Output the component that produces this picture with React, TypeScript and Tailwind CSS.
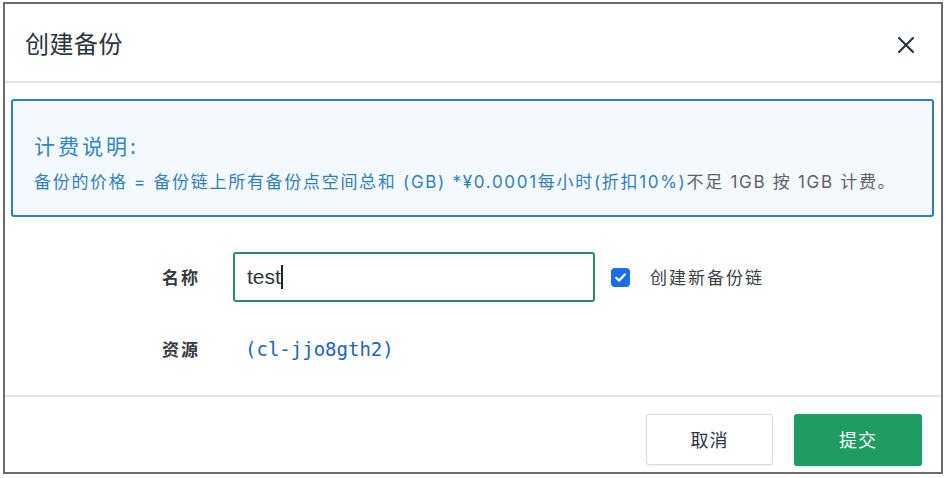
import React from "react";

const sans = '"Inter", "Noto Sans CJK SC", sans-serif';
const cjk = '"Noto Sans CJK SC", sans-serif';

export default function App() {
  return (
    <div className="w-[946px] h-[478px] bg-white pt-[2px] pl-[3px]" style={{ fontFamily: sans }}>
      <div className="w-[940px] h-[472px] border-2 border-[#6b6b6b] bg-white flex flex-col">
        {/* header */}
        <div className="h-[79px] shrink-0 flex items-center justify-between pl-[20px] pr-[26px] border-b-2 border-[#dfe3e7]">
          <div className="text-[24px] leading-none text-[#2b3440] tracking-[0.5px]" style={{ fontFamily: cjk }}>
            创建备份
          </div>
          <svg width="18" height="18" viewBox="0 0 18 18" className="mt-[4px]">
            <path d="M2 2 L16 16 M16 2 L2 16" stroke="#2b3440" strokeWidth="2.2" strokeLinecap="round" />
          </svg>
        </div>

        {/* info box */}
        <div className="mt-[16px] ml-[6px] mr-[7px] h-[118px] shrink-0 border-2 border-[#2b7ec1] rounded-[3px] bg-[#f4f9fd] pl-[21px] pt-[32px]">
          <div className="text-[21px] leading-[24px] text-[#2f86c8] tracking-[3px]" style={{ fontFamily: cjk }}>
            计费说明:
          </div>
          <div className="mt-[15px] text-[17px] leading-[21px] tracking-[1.7px] whitespace-nowrap" style={{ fontFamily: sans }}>
            <span className="text-[#2f80c2]">备份的价格 = 备份链上所有备份点空间总和 (GB) *¥0.0001每小时(折扣10%)</span>
            <span className="text-[#5c636b]">不足 1GB 按 1GB 计费。</span>
          </div>
        </div>

        {/* form */}
        <div className="flex-1 flex flex-col pl-[157px] pt-[35px]">
          <div className="flex items-center h-[50px]">
            <div className="w-[71px] text-[17px] font-bold text-[#333a42] tracking-[2px]" style={{ fontFamily: cjk }}>
              名称
            </div>
            <div className="w-[362px] h-[50px] border-2 border-[#2a8f62] rounded-[3px] flex items-center pl-[12px]">
              <span className="text-[21px] text-[#2f3640]" style={{ fontFamily: '"Liberation Sans", Arial, sans-serif' }}>
                test
              </span>
              <span className="w-[2px] h-[24px] bg-[#222] ml-[0px]" />
            </div>
            <div className="ml-[16px] w-[19px] h-[19px] rounded-[4px] bg-[#1a6ee8] flex items-center justify-center">
              <svg width="13" height="13" viewBox="0 0 13 13">
                <path d="M2.2 6.8 L5.2 9.6 L10.8 3.4" stroke="white" strokeWidth="2.2" fill="none" strokeLinecap="round" strokeLinejoin="round" />
              </svg>
            </div>
            <div className="ml-[20px] text-[17px] text-[#3a4048] tracking-[2px]" style={{ fontFamily: cjk }}>
              创建新备份链
            </div>
          </div>
          <div className="flex items-center mt-[35px] h-[24px]">
            <div className="w-[83px] text-[17px] font-bold text-[#333a42] tracking-[2px]" style={{ fontFamily: cjk }}>
              资源
            </div>
            <div className="text-[19px] text-[#2263c0]" style={{ fontFamily: '"DejaVu Sans Mono", monospace' }}>
              (cl-jjo8gth2)
            </div>
          </div>
        </div>

        {/* footer */}
        <div className="h-[77px] shrink-0 border-t-2 border-[#e4e7ea] flex items-center justify-end gap-[21px] pr-[19px] pt-[10px]">
          <button className="w-[127px] h-[51px] border border-[#d6dbe0] rounded-[3px] bg-white shadow-[0_1px_2px_rgba(0,0,0,0.06)] text-[18px] text-[#2b3440] tracking-[1px]" style={{ fontFamily: cjk }}>
            取消
          </button>
          <button className="w-[128px] h-[52px] rounded-[3px] bg-[#1f9c62] text-[18px] text-white tracking-[1px] shadow-[0_1px_3px_rgba(0,0,0,0.12)]" style={{ fontFamily: cjk }}>
            提交
          </button>
        </div>
      </div>
    </div>
  );
}
